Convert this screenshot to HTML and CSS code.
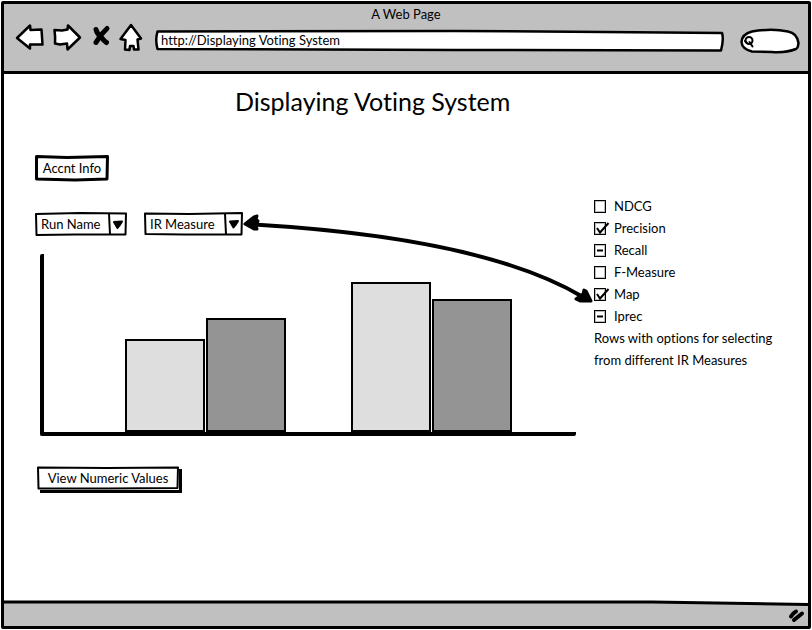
FILE: index.html
```html
<!DOCTYPE html>
<html lang="en">
<head>
<meta charset="utf-8">
<title>Displaying Voting System</title>
<link rel="stylesheet" href="styles.css">
</head>
<body>
<div class="window">
  <header class="chrome">
    <div class="chrome-title">A Web Page</div>
    <div class="toolbar">
      <nav class="nav" aria-label="Browser">
        <button type="button" class="icon-button" aria-label="Back">
          <svg width="28" height="28" viewBox="0 0 28 28"><path class="shape" d="M1 14 L14 1.500 L14.500 6 L25.500 5.500 L26.500 20.500 L14 20.500 L14 24.500 Z"/></svg>
        </button>
        <button type="button" class="icon-button" aria-label="Forward">
          <svg width="28" height="28" viewBox="0 0 28 28"><path class="shape" d="M27 13.500 L15 1.500 L14.500 5.500 L9 6.500 L1.500 6 Q2.500 13 2 19.500 L7 20.500 L14 19.500 L14.500 25.500 Z"/></svg>
        </button>
        <button type="button" class="icon-button stop" aria-label="Stop">
          <svg width="18" height="28" viewBox="0 0 18 28"><path class="cross" d="M4 5.500 Q5 10 9.500 13.500 Q12 17 14.500 18.500 M15 4.500 Q8 11 4 18.500"/></svg>
        </button>
        <button type="button" class="icon-button" aria-label="Home">
          <svg width="24" height="28" viewBox="0 0 24 28"><path class="shape" d="M12 1 L22 14.500 L18.500 15.500 L19.500 25.500 L15 25.500 L14.500 22 L11 22 L10.500 26 L6 25.500 L6.500 16 L1.500 15 Z"/></svg>
        </button>
      </nav>
      <div class="address">
        <svg class="outline" viewBox="0 0 570 22" preserveAspectRatio="none" aria-hidden="true"><path d="M2.500 1.500 L300 1 L450 2 L568 3 Q570 9 567 20.500 L300 20 L2.500 19 Q0 10 2.500 1.500 Z"/></svg>
        <input class="address-input" type="text" aria-label="Address" value="http://Displaying Voting System">
      </div>
      <div class="search">
        <svg class="outline" viewBox="0 0 60 26" preserveAspectRatio="none" aria-hidden="true"><path d="M12 3.500 Q32 0 48 3.500 Q57 5 58.500 15 Q58 20 56 21 Q46 25 32 24 L12 23.500 Q2 21 1.500 14 Q2 6 12 3.500 Z"/></svg>
        <svg class="lens" width="12" height="14" viewBox="0 0 12 14" aria-hidden="true"><circle cx="6" cy="6.500" r="3.500"/><path d="M4 9 L2 7 M6.500 8 L9.500 12.500"/></svg>
        <input class="search-input" type="text" aria-label="Search">
      </div>
    </div>
  </header>

  <main class="page">
    <h1 class="heading">Displaying Voting System</h1>
    <div class="columns">
      <section class="results">
        <button type="button" class="button account">
          <svg class="outline" viewBox="0 0 74 26" preserveAspectRatio="none" aria-hidden="true"><path d="M1.500 1.500 L32 2.500 L72.500 1.500 L72 24 L40 25 L1.500 24 Z"/></svg>
          <span class="button-text">Accnt Info</span>
        </button>
        <div class="filters">
          <div class="dropdown run">
            <svg class="outline thin" viewBox="0 0 92 24" preserveAspectRatio="none" aria-hidden="true"><path d="M1 2 L45 1 L91 1.500 L90.500 22.500 L40 22.500 L1.500 23 Z"/></svg>
            <select class="select" aria-label="Run name"><option>Run Name</option></select>
            <svg class="caret" width="19" height="24" viewBox="0 0 19 24" aria-hidden="true"><path class="rule" d="M1 1.500 L2 22.500"/><path class="tip" d="M6 10 L14 9.500 L11.500 13.500 L9.500 16 Z"/></svg>
          </div>
          <div class="dropdown measure">
            <svg class="outline thin" viewBox="0 0 99 24" preserveAspectRatio="none" aria-hidden="true"><path d="M1 1.500 L45 2 L98 1 L97.500 22.500 L40 22.500 L1.500 22 Z"/></svg>
            <select class="select" aria-label="IR measure"><option>IR Measure</option></select>
            <svg class="caret" width="19" height="24" viewBox="0 0 19 24" aria-hidden="true"><path class="rule" d="M1 1.500 L2 22.500"/><path class="tip" d="M6 9.500 L14 9 L11.500 13 L9.500 15.500 Z"/></svg>
          </div>
        </div>
        <div class="chart" role="img" aria-label="Bar chart with two pairs of bars">
          <div class="pair">
            <div class="bar light" style="height:52%"></div>
            <div class="bar dark" style="height:64%"></div>
          </div>
          <div class="pair">
            <div class="bar light" style="height:84%"></div>
            <div class="bar dark" style="height:75%"></div>
          </div>
        </div>
        <button type="button" class="button numeric">
          <svg class="outline thin" viewBox="0 0 142 24" preserveAspectRatio="none" aria-hidden="true"><path d="M1 1.500 L70 2 L141 1.500 L140.500 22 L70 22.500 L1.500 22.500 Z"/></svg>
          <span class="button-text">View Numeric Values</span>
        </button>
      </section>

      <aside class="options">
        <label class="option"><span class="box"><input type="checkbox"><svg class="tick" viewBox="0 0 16 14"><path d="M3 6 L6 10.500 L14.500 1"/></svg></span>NDCG</label>
        <label class="option"><span class="box"><input type="checkbox" checked><svg class="tick" viewBox="0 0 16 14"><path d="M3 6 L6 10.500 L14.500 1"/></svg></span>Precision</label>
        <label class="option"><span class="box"><input type="checkbox" data-mixed><svg class="dash" viewBox="0 0 16 14"><path d="M3 6.500 H9"/></svg></span>Recall</label>
        <label class="option"><span class="box"><input type="checkbox"><svg class="tick" viewBox="0 0 16 14"><path d="M3 6 L6 10.500 L14.500 1"/></svg></span>F-Measure</label>
        <label class="option"><span class="box"><input type="checkbox" checked><svg class="tick" viewBox="0 0 16 14"><path d="M3 6 L6 10.500 L14.500 1"/></svg></span>Map</label>
        <label class="option"><span class="box"><input type="checkbox" data-mixed><svg class="dash" viewBox="0 0 16 14"><path d="M3 6.500 H9"/></svg></span>Iprec</label>
        <p class="note">Rows with options for selecting<br>from different IR Measures</p>
      </aside>

      <svg class="connector" viewBox="0 0 352 96" preserveAspectRatio="none" aria-hidden="true">
        <path class="curve" d="M10 14.500 Q242 28 341 87"/>
        <path class="head" d="M3 14 L12 7 L15 6 L14 9 L16 11 L14 15 L15 19 L12 19 Z M349 91 L344 81 L342 80 L341 84 L338 86 L334 89 L338 91 L345 91 Z"/>
      </svg>
    </div>
  </main>

  <footer class="status">
    <svg class="status-line" viewBox="0 0 806 6" preserveAspectRatio="none" aria-hidden="true"><path class="fill" d="M0 0 H806 V4 L600 2 H0 Z"/><path class="edge" d="M0 2 L500 2 L650 2 L806 4.500"/></svg>
    <svg class="grip" width="18" height="16" viewBox="0 0 18 16" aria-hidden="true"><path d="M5 8.500 Q7 5 10 3.500 M8 12 L16 5.500"/></svg>
  </footer>
</div>
<script src="script.js"></script>
</body>
</html>
```
FILE: styles.css
```css
* {
  box-sizing: border-box;
}

body {
  margin: 0;
  padding: 1px;
  background: #fff;
  color: #000;
  font-family: Lato, "Open Sans", sans-serif;
  font-size: 13px;
  font-variant-ligatures: none;
  line-height: 22px;
}

button,
input,
select {
  margin: 0;
  padding: 0;
  border: 0;
  background: none;
  color: inherit;
  font: inherit;
  font-variant-ligatures: none;
}

svg {
  display: block;
  overflow: visible;
}

.window {
  display: flex;
  flex-direction: column;
  min-height: calc(100vh - 2px);
  border: 3px solid #000;
  border-radius: 2px;
}

/* Browser chrome */

.chrome {
  padding-bottom: 18px;
  border-bottom: 3px solid #000;
  background: #c0c0c0;
}

.chrome-title {
  height: 19px;
  line-height: 20px;
  text-align: center;
}

.toolbar {
  display: flex;
  align-items: center;
  gap: 12px;
  height: 30px;
  padding: 0 8px 0 12px;
}

.nav {
  display: flex;
  gap: 9px;
}

.icon-button {
  display: block;
}

.stop {
  margin-left: 2px;
}

.shape {
  fill: #fff;
  stroke: #000;
  stroke-width: 2.5;
  stroke-linejoin: round;
}

.cross {
  fill: none;
  stroke: #000;
  stroke-width: 5;
  stroke-linecap: round;
}

.address,
.search,
.button,
.dropdown {
  position: relative;
}

.outline {
  position: absolute;
  inset: 0;
  width: 100%;
  height: 100%;
  fill: #fff;
  stroke: #000;
  stroke-width: 3;
  stroke-linejoin: round;
}

.outline.thin {
  stroke-width: 2;
}

.outline path,
.status-line path {
  vector-effect: non-scaling-stroke;
}

.address {
  flex: 1;
  height: 22px;
  margin-top: 6px;
}

.address .outline,
.search .outline {
  stroke-width: 2.5;
}

.address-input {
  position: relative;
  display: block;
  width: 100%;
  height: 20px;
  padding: 0 6px;
}

.search {
  display: flex;
  align-items: center;
  width: 60px;
  height: 26px;
  margin-left: 4px;
  margin-top: 6px;
  padding: 0 8px 0 3px;
}

.lens {
  position: relative;
  flex: none;
  fill: none;
  stroke: #000;
  stroke-width: 2;
  stroke-linecap: round;
}

.search-input {
  position: relative;
  width: 100%;
}

/* Page */

.page {
  flex: 1;
  padding: 12px 28px 40px 31px;
}

.heading {
  margin: 0 0 39px 200px;
  font-size: 25px;
  font-weight: 400;
  line-height: 30px;
}

.columns {
  position: relative;
  display: grid;
  grid-template-columns: 1fr 186px;
  gap: 18px;
}

.button {
  display: block;
  text-align: center;
  white-space: nowrap;
}

.button-text {
  position: relative;
}

.account {
  width: 74px;
  height: 26px;
}

.filters {
  display: flex;
  gap: 17px;
  margin-top: 31px;
}

.dropdown {
  height: 24px;
}

.run {
  width: 92px;
}

.measure {
  width: 99px;
}

.select {
  position: relative;
  display: block;
  width: 100%;
  height: 24px;
  padding: 0 19px 0 6px;
  appearance: none;
}

.caret {
  position: absolute;
  top: 0;
  right: 0;
  pointer-events: none;
}

.rule {
  stroke: #000;
  stroke-width: 2;
}

.tip {
  stroke: #000;
  stroke-width: 2;
  stroke-linejoin: round;
}

.chart {
  display: flex;
  align-items: flex-end;
  gap: 65px;
  height: 182px;
  margin: 18px 0 0 5px;
  padding-left: 81px;
  border: solid #000;
  border-width: 0 0 4px 4px;
  border-radius: 2px;
}

.pair {
  display: flex;
  align-items: flex-end;
  gap: 1px;
  width: 161px;
  height: 100%;
}

.bar {
  flex: 1;
  border: 2px solid #000;
}

.light {
  background: #dedede;
}

.dark {
  background: #949494;
}

.numeric {
  width: 142px;
  height: 24px;
  margin: 30px 0 0 2px;
  box-shadow: 3px 3px 0 #000;
}

.options {
  padding-top: 40px;
}

.option {
  display: flex;
  align-items: center;
  gap: 7px;
  height: 22px;
}

.box {
  position: relative;
  width: 13px;
  height: 13px;
}

.box input {
  display: block;
  width: 12px;
  height: 13px;
  border: 1px solid #000;
  background: #fff;
  box-shadow: inset 0 0 0 1px #bbb;
  appearance: none;
}

.box svg {
  position: absolute;
  top: 0;
  left: 0;
  display: none;
  width: 16px;
  height: 14px;
  fill: none;
  stroke: #000;
  stroke-width: 2;
  pointer-events: none;
}

.box input:checked + .tick,
.box input:indeterminate + .dash {
  display: block;
}

.note {
  margin: 0;
  white-space: nowrap;
}

/* Arrow from the measure drop-down to its options */

.connector {
  position: absolute;
  top: 55px;
  left: 207px;
  width: calc(100% - 393px);
  height: 96px;
  pointer-events: none;
}

.curve {
  fill: none;
  stroke: #000;
  stroke-width: 4;
}

.head {
  stroke: #000;
  stroke-width: 3;
  stroke-linejoin: round;
}

/* Status bar */

.status {
  position: relative;
  display: flex;
  align-items: flex-end;
  justify-content: flex-end;
  height: 25px;
  padding: 0 4px 2px;
  background: #c0c0c0;
}

.status-line {
  position: absolute;
  top: -1px;
  left: 0;
  width: 100%;
  height: 6px;
}

.status-line .fill {
  fill: #fff;
}

.status-line .edge {
  fill: none;
  stroke: #000;
  stroke-width: 3;
}

.grip {
  fill: none;
  stroke: #000;
  stroke-width: 4;
  stroke-linecap: round;
}
```
FILE: script.js
```js
document.querySelectorAll("input[data-mixed]").forEach(function (input) {
  input.indeterminate = true;
});
```
